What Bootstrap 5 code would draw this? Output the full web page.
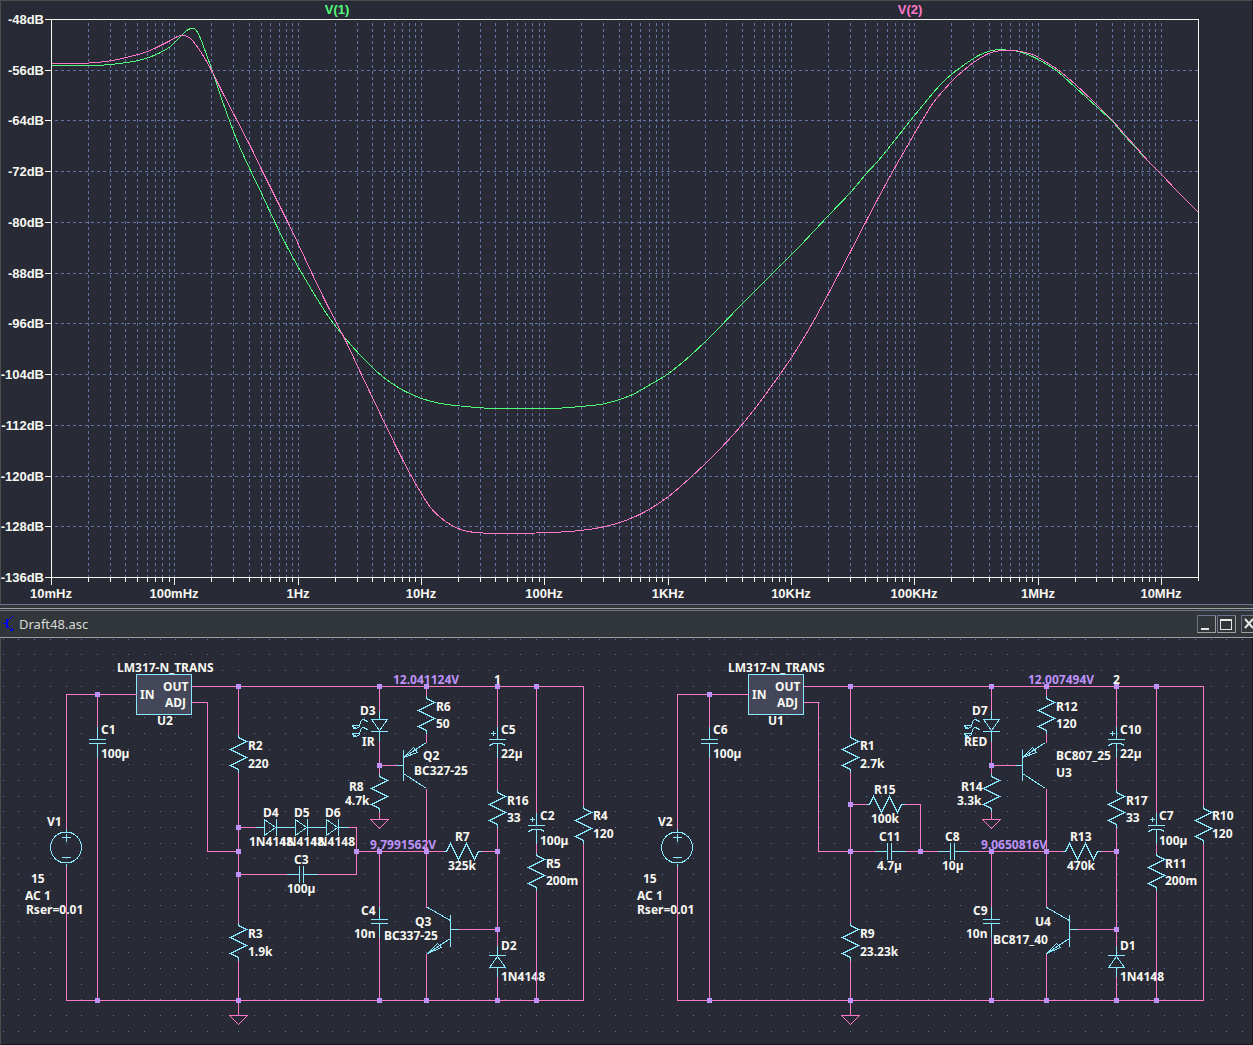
<!DOCTYPE html>
<html lang="en">
<head>
<meta charset="utf-8">
<meta name="viewport" content="width=device-width, initial-scale=1">
<title>Draft48.asc</title>
<link rel="stylesheet" href="https://cdn.jsdelivr.net/npm/bootstrap@5.3.0/dist/css/bootstrap.min.css">
<style>
:root { --pane: #282a36; --chrome: #31363b; --ink: #f8f8f2; --gridline: #6272a4; --wire: #ff79c6; --part: #8be9fd; --node: #bd93f9; --trace: #50fa7b; }
body { background: var(--pane); color: var(--ink); font-family: "Noto Sans", "Open Sans", sans-serif; }
.wave-pane, .sheet-pane { background: var(--pane); border-left: 1px solid #4c4c4c; border-right: 1px solid #16171d; }
.wave-pane { border-top: 1px solid #4c4c4c; }
.sheet-pane { border-bottom: 1px solid #16171d; }
.sheet-pane svg, .wave-pane svg { display: block; width: 100%; height: auto; }
.splitter { height: 7px; background: var(--chrome); border-top: 1px solid #6f7389; border-bottom: 1px solid #6f7389; }
.splitter hr { margin: 3px 0 0; border: 0; height: 1px; background: #a09fa0; opacity: 1; }
.title-strip { height: 27px; background: var(--chrome); border-bottom: 1px solid #a09fa0; padding-left: 3px; overflow: hidden; }
.title-strip h1 { font-size: 13px; line-height: 18px; font-weight: 400; color: #d8d9d6; }
.win-tools { margin-right: -7px; gap: 1px; }
.win-tools button { width: 19px; height: 18px; padding: 0; background: var(--chrome); border: 1px solid; border-color: #6f7389 #a09fa0 #a09fa0 #6f7389; color: #e8e8e4; }
.win-tools button svg { display: block; }
.axis-text { font: bold 13px "Liberation Sans", Arial, sans-serif; fill: var(--ink); }
.sheet-text { font: bold 12px "Noto Sans", "Open Sans", sans-serif; fill: var(--ink); }
.thin { fill: none; stroke-width: 1; shape-rendering: crispEdges; }
.s-grid { stroke: var(--gridline); }
.s-axis { stroke: var(--ink); }
.s-wire { stroke: var(--wire); }
.s-part { stroke: var(--part); }
.s-trace { stroke: var(--trace); }
</style>
<script src="https://cdn.jsdelivr.net/npm/bootstrap@5.3.0/dist/js/bootstrap.bundle.min.js"></script>
</head>
<body>
<div class="d-flex flex-column min-vh-100">
  <section class="wave-pane" aria-label="Frequency response">
    <svg viewBox="1 1 1251 603" id="wave">
      <g transform="translate(.5 .5)" class="thin">
        <path id="gridV" class="s-grid" stroke-dasharray="3 3"/>
        <path id="gridH" class="s-grid" stroke-dasharray="3 3"/>
        <path id="axes" class="s-axis"/>
        <path id="traceOne" class="s-trace"/>
        <path id="traceTwo" class="s-wire"/>
      </g>
      <g id="axisText" class="axis-text">
        <text x="337" y="14" text-anchor="middle" style="fill:var(--trace)">V(1)</text>
        <text x="910" y="14" text-anchor="middle" style="fill:var(--wire)">V(2)</text>
      </g>
    </svg>
  </section>

  <div class="splitter"><hr></div>

  <header class="title-strip d-flex align-items-center">
    <svg width="12" height="18" viewBox="0 0 12 18" fill="none" stroke="#0000ff" shape-rendering="crispEdges" aria-hidden="true">
      <path d="M0 8.500H4M5 6L10 1M5 11L10 16"/><path d="M4 4V13" stroke-width="2"/><path d="M10 12.500V16H7z" fill="#0000ff" stroke="none"/>
    </svg>
    <h1 class="m-0 ms-1">Draft48.asc</h1>
    <div class="win-tools d-flex ms-auto">
      <button type="button" aria-label="Minimize"><svg width="17" height="16"><path d="M3 12h8v2H3z" fill="currentColor"/></svg></button>
      <button type="button" aria-label="Maximize"><svg width="17" height="16" fill="none" stroke="currentColor" shape-rendering="crispEdges"><path d="M2.500 3V13.500H13.500V3"/><path d="M2 4H14" stroke-width="2"/></svg></button>
      <button type="button" aria-label="Close" class="ms-1"><svg width="17" height="16" stroke="currentColor" stroke-width="2"><path d="M3 3L11 12M11 3L3 12"/></svg></button>
    </div>
  </header>

  <section class="sheet-pane flex-grow-1" aria-label="Schematic">
    <svg viewBox="1 638 1251 406" id="sheet">
      <defs>
        <path id="res" d="M0 0V3L8 7L-8 15L8 23L-8 31L0 35V38"/>
        <path id="cap" d="M0 0V13M-8.500 13H8.500M-8.500 17H8.500M0 17V31"/>
        <path id="pcap" d="M0 0V13M-8.500 13H8.500M-8 19L-4 17H4L8 19M0 17V31M-6.500 7H-1.500M-4 4.500V9.500"/>
        <path id="dio" d="M0 0H9M9 -8V8L20 0ZM21 -8.500V8.500M21 0H31"/>
        <g id="led">
          <path d="M0 0V9M-8 9H8L0 20ZM-8.500 21H8.500M0 21V31"/>
          <path d="M-12 12L-13 10L-17 9L-19 11L-20 16L-23 18L-27 16M-21 15L-27 15L-25 19"/>
          <path d="M-12 20L-13 18L-17 17L-19 19L-20 24L-23 26L-27 24M-21 23L-27 23L-25 27"/>
        </g>
        <path id="pnp" d="M-7 0H0M0 -16V15M0 -8L23 -23M0 -8L10 -18L14 -13ZM0 8L23 23"/>
        <path id="npn" d="M8 0H0M0 -15V17M0 -9L-23 -22M0 9L-23 24L-13 14L-9 18L-23 24"/>
        <g id="vsrc"><circle cx="-.5" cy="19" r="15.500"/><path d="M0 0V4M0 35V38M-4.500 9H4.500M0 5V13M-4.500 29H4.500"/></g>
        <path id="gnd" d="M-9 0H9L0 9Z"/>
      </defs>
      <g transform="translate(.5 .5)" class="thin">
        <path id="dots" class="s-grid"/>
        <g class="s-part" fill="#44475a"><path d="M136 674H191V714H136ZM748 674H803V714H748Z"/></g>
      </g>
      <g id="sheetText" class="sheet-text"></g>
      <g transform="translate(.5 .5)" class="thin">
        <path class="s-wire" d="M66 828V694H136M97 694V726M97 757V1000M66 866V1000H583V843M191 686H583V805M191 702H207V851H238M238 686V734M238 772V922M238 960V1015
          M238 827H255M348 827H356V874H317M238 874H286M356 851H443M481 851H497M379 686V710M379 741V773M379 765H396M379 811V819M379 851V906M379 937V1000
          M426 686V695M426 733V742M426 788V907M426 953V1000M497 686V726M497 757V789M497 827V945M497 976V1000M458 929H497M536 686V812M536 843V852M536 890V1000"/>
        <path class="s-wire" d="M677 828V694H748M709 694V726M709 757V1000M677 866V1000H1203V843M803 686H1203V805M803 702H818V851H874M850 686V734M850 772V922M850 960V1015
          M850 804H866M904 804H920V851M905 851H937M968 851H1062M1100 851H1116M991 686V710M991 741V773M991 765H1015M991 811V819M991 851V906M991 937V1000
          M1046 686V695M1046 733V742M1046 788V907M1046 953V1000M1116 686V726M1116 757V789M1116 827V945M1116 976V1000M1077 929H1116M1156 686V812M1156 843V852M1156 890V1000"/>
        <g id="grounds" class="s-wire"></g>
        <g id="parts" class="s-part"></g>
        <path id="nodes" stroke="none" fill="#bd93f9"/>
      </g>
    </svg>
  </section>
</div>

<script>
const NS = "http://www.w3.org/2000/svg";
const byId = id => document.getElementById(id);

function addText(parent, x, y, value, anchor, fill) {
  const t = document.createElementNS(NS, "text");
  t.setAttribute("x", x); t.setAttribute("y", y);
  if (anchor) t.setAttribute("text-anchor", anchor);
  if (fill) t.style.fill = fill;
  t.textContent = value;
  parent.appendChild(t);
}

/* Plot: log frequency axis (10 mHz to 20 MHz), gain axis (-48 dB to -136 dB) */
const left = 51, right = 1198, top0 = 19, bottom = 577, decade = 123.33;
const decades = ["10mHz", "100mHz", "1Hz", "10Hz", "100Hz", "1KHz", "10KHz", "100KHz", "1MHz", "10MHz"];
let gv = "", gh = "", ax = `M44 19H1198V580M51 19V584M44 577H1198`;
decades.forEach((name, d) => {
  for (let k = 1; k < 10; k++) {
    const x = Math.round(left + decade * (d + Math.log10(k)));
    if (x >= right) break;
    if (x > left) gv += `M${x} 22.5V${bottom}`;
    ax += `M${x} ${bottom}V${k === 1 ? 584 : 581}`;
  }
  addText(byId("axisText"), Math.round(left + decade * d), 598, name, "middle");
});
for (let i = 0; i < 12; i++) {
  const y = Math.round(top0 + (bottom - top0) / 11 * i);
  if (i > 0 && i < 11) gh += `M54.5 ${y}H${right}`;
  ax += `M44 ${y}H${left}`;
  addText(byId("axisText"), 44, y + 5, `${-48 - 8 * i}dB`, "end");
}
byId("gridV").setAttribute("d", gv);
byId("gridH").setAttribute("d", gh);
byId("axes").setAttribute("d", ax);

/* Catmull-Rom curve through the sampled points */
function curve(points) {
  const p = points.trim().split(/\s+/).map(s => s.split(",").map(Number));
  let d = `M${p[0]}`;
  for (let i = 0; i < p.length - 1; i++) {
    const a = p[i - 1] || p[i], b = p[i], c = p[i + 1], e = p[i + 2] || c;
    d += `C${b[0] + (c[0] - a[0]) / 6} ${b[1] + (c[1] - a[1]) / 6} ${c[0] - (e[0] - b[0]) / 6} ${c[1] - (e[1] - b[1]) / 6} ${c[0]} ${c[1]}`;
  }
  return d;
}
byId("traceOne").setAttribute("d", curve(`51,65 92,65 110,64 126,62 138,60 148,57 158,53 170,46 178,38 185,31 190,28 193,28 196,30
  200,38 206,54 212,71 220,95 226,112 233,131 239,146 250,170 262,195 275,223 287,247 298,267 308,284 317,299 330,319 345,338 360,355 375,370
  390,382 405,391 421,398 440,403 465,406 495,408 550,408 580,406 605,403 630,395 650,384 668,373 690,355 715,331 740,305 765,280
  791,254 800,245 828,215 850,192 865,174 877,161 887,149 902,130 914,115 928,98 940,84 952,73 967,62 978,55 988,51 998,49
  1010,50 1018,51 1027,54 1038,59 1057,71 1075,87 1097,107 1112,121 1124,135 1135,147 1149,162 1161,174 1177,191 1198,212`));
byId("traceTwo").setAttribute("d", curve(`51,63 77,63 96,62 112,60 130,56 147,51 158,46 170,40 177,36 183,35 187,36 192,40
  200,51 210,68 222,92 234,115 250,146 262,171 275,197 287,221 298,244 312,274 326,303 345,340 360,372 380,414 400,455 415,483
  430,507 445,521 460,529 475,532 505,533 550,532 580,530 605,526 625,520 645,511 668,496 690,477 715,453 740,426 765,394 791,357
  810,326 828,293 850,251 865,222 877,199 895,166 902,154 914,133 923,118 933,102 952,80 962,71 973,62 988,53 1000,50
  1013,50 1020,51 1032,54 1038,57 1057,69 1075,84 1097,105 1112,120 1124,134 1135,146 1149,162 1161,174 1177,191 1198,212`));

/* Schematic: snap grid, parts, junctions, labels */
let dots = "";
for (let r = 0; r < 26; r++)
  for (let c = 0; c < 80; c++)
    dots += `M${Math.floor(3.3 + 15.687 * c) - .5} ${Math.floor(639.3 + 15.68 * r)}h1`;
byId("dots").setAttribute("d", dots);

function place(parent, name, x, y, turn) {
  const u = document.createElementNS(NS, "use");
  u.setAttribute("href", "#" + name);
  u.setAttribute("transform", `translate(${x} ${y})` + (turn ? ` rotate(${turn})` : ""));
  parent.appendChild(u);
}
[
  ["vsrc", 66, 828], ["cap", 97, 726], ["res", 238, 734], ["res", 238, 922], ["dio", 255, 827], ["dio", 286, 827], ["dio", 317, 827],
  ["cap", 286, 874, -90], ["led", 379, 710], ["res", 379, 773], ["cap", 379, 906], ["res", 426, 695], ["pnp", 403, 765], ["npn", 450, 929],
  ["res", 443, 851, -90], ["pcap", 497, 726], ["res", 497, 789], ["dio", 497, 976, -90], ["pcap", 536, 812], ["res", 536, 852], ["res", 583, 805],
  ["vsrc", 677, 828], ["cap", 709, 726], ["res", 850, 734], ["res", 850, 922], ["res", 866, 804, -90], ["cap", 874, 851, -90], ["cap", 937, 851, -90],
  ["led", 991, 710], ["res", 991, 773], ["cap", 991, 906], ["res", 1046, 695], ["pnp", 1022, 765], ["npn", 1069, 929], ["res", 1062, 851, -90],
  ["pcap", 1116, 726], ["res", 1116, 789], ["dio", 1116, 976, -90], ["pcap", 1156, 812], ["res", 1156, 852], ["res", 1203, 805]
].forEach(a => place(byId("parts"), ...a));
[[238, 1015], [379, 819], [850, 1015], [991, 819]].forEach(a => place(byId("grounds"), "gnd", ...a));

byId("nodes").setAttribute("d", [
  [97, 694, 1000], [238, 686, 827, 851, 874, 1000], [356, 851], [379, 686, 765, 851, 1000], [426, 686, 851, 1000], [497, 686, 851, 929, 1000], [536, 686, 1000],
  [709, 694, 1000], [850, 686, 804, 851, 1000], [920, 851], [991, 686, 765, 851, 1000], [1046, 686, 851, 1000], [1116, 686, 851, 929, 1000], [1156, 686, 1000]
].map(([x, ...ys]) => ys.map(y => `M${x - 2.5} ${y - 2.5}h5v5h-5z`).join("")).join(""));

const labels = [
  [117, 672, "LM317-N_TRANS"], [140, 699, "IN"], [163, 691, "OUT"], [165, 707, "ADJ"], [157, 725, "U2"], [101, 734, "C1"], [101, 758, "100µ"],
  [47, 826, "V1"], [31, 883, "15"], [25, 900, "AC 1"], [26, 914, "Rser=0.01"], [248, 750, "R2"], [248, 768, "220"], [263, 817, "D4"], [294, 817, "D5"],
  [325, 817, "D6"], [249, 846, "1N4148"], [280, 846, "1N4148"], [311, 846, "1N4148"], [294, 864, "C3"], [287, 893, "100µ"], [248, 938, "R3"], [248, 956, "1.9k"],
  [360, 715, "D3"], [362, 746, "IR"], [349, 791, "R8"], [345, 805, "4.7k"], [436, 711, "R6"], [436, 728, "50"], [423, 760, "Q2"], [414, 775, "BC327-25"],
  [455, 841, "R7"], [448, 870, "325k"], [494, 684, "1"], [501, 734, "C5"], [501, 758, "22µ"], [507, 805, "R16"], [507, 822, "33"], [540, 820, "C2"],
  [540, 845, "100µ"], [593, 820, "R4"], [593, 838, "120"], [546, 868, "R5"], [546, 885, "200m"], [361, 915, "C4"], [354, 938, "10n"], [415, 926, "Q3"],
  [384, 940, "BC337-25"], [501, 950, "D2"], [501, 981, "1N4148"],
  [728, 672, "LM317-N_TRANS"], [752, 699, "IN"], [775, 691, "OUT"], [777, 707, "ADJ"], [768, 725, "U1"], [713, 734, "C6"], [713, 758, "100µ"],
  [658, 826, "V2"], [643, 883, "15"], [637, 900, "AC 1"], [637, 914, "Rser=0.01"], [860, 750, "R1"], [860, 768, "2.7k"], [874, 794, "R15"], [871, 823, "100k"],
  [879, 841, "C11"], [877, 870, "4.7µ"], [945, 841, "C8"], [942, 870, "10µ"], [860, 938, "R9"], [860, 956, "23.23k"], [972, 715, "D7"], [964, 746, "RED"],
  [961, 791, "R14"], [957, 805, "3.3k"], [1056, 711, "R12"], [1056, 728, "120"], [1056, 760, "BC807_25"], [1056, 777, "U3"], [1070, 841, "R13"],
  [1067, 870, "470k"], [1113, 684, "2"], [1120, 734, "C10"], [1120, 758, "22µ"], [1126, 805, "R17"], [1126, 822, "33"], [1159, 820, "C7"], [1159, 845, "100µ"],
  [1212, 820, "R10"], [1212, 838, "120"], [1165, 868, "R11"], [1165, 885, "200m"], [973, 915, "C9"], [966, 938, "10n"], [1035, 926, "U4"],
  [993, 944, "BC817_40"], [1120, 950, "D1"], [1120, 981, "1N4148"]
];
labels.forEach(([x, y, s]) => addText(byId("sheetText"), x, y, s));
[[393, 684, "12.041124V"], [370, 849, "9.7991562V"], [1028, 684, "12.007494V"], [981, 849, "9.0650816V"]]
  .forEach(([x, y, s]) => addText(byId("sheetText"), x, y, s, "start", "var(--node)"));
</script>
</body>
</html>
